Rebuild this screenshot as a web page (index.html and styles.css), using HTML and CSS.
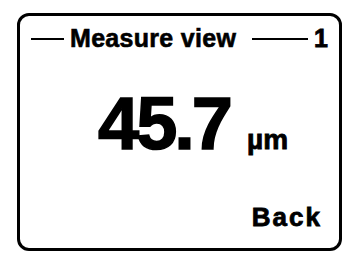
FILE: index.html
```html
<!DOCTYPE html>
<html>
<head>
<meta charset="utf-8">
<link rel="stylesheet" href="styles.css">
</head>
<body>
<div class="screen">
  <div class="header">
    <span class="dash dash-left"></span>
    <span class="title">Measure view</span>
    <span class="dash dash-right"></span>
    <span class="page">1</span>
  </div>
  <div class="reading">
    <span class="value">45.7</span>
    <span class="unit">µm</span>
  </div>
  <div class="footer">
    <span class="back">Back</span>
  </div>
</div>
</body>
</html>
```
FILE: styles.css
```css
html, body {
  margin: 0;
  padding: 0;
  background: #fff;
}
body {
  width: 348px;
  height: 261px;
  overflow: hidden;
  font-family: "Liberation Sans", Arial, sans-serif;
  font-weight: bold;
  color: #000;
}
.screen {
  box-sizing: border-box;
  margin: 13px 0 0 17px;
  width: 325px;
  height: 238px;
  border: 3px solid #000;
  border-radius: 12px;
  display: flex;
  flex-direction: column;
}
.header {
  display: flex;
  align-items: center;
  padding: 10px 11px 0 11px;
  height: 24px;
  font-size: 25px;
  line-height: 24px;
}
.dash {
  height: 2px;
  background: #000;
  margin-top: 2px;
}
.dash-left {
  width: 33px;
  margin-right: 6px;
}
.dash-right {
  flex: 1;
  margin-left: 16px;
  margin-right: 6px;
}
.title {
  letter-spacing: 0.3px;
  -webkit-text-stroke: 0.6px #000;
}
.page {
  -webkit-text-stroke: 0.8px #000;
}
.reading {
  display: flex;
  align-items: baseline;
  margin-top: 37px;
  padding-left: 78px;
}
.value {
  font-size: 74px;
  line-height: 74px;
  letter-spacing: -3px;
  -webkit-text-stroke: 1.5px #000;
}
.unit {
  font-size: 28px;
  margin-left: 17px;
  -webkit-text-stroke: 0.8px #000;
}
.footer {
  margin-top: auto;
  display: flex;
  justify-content: flex-end;
  padding: 0 17px 18px 0;
}
.back {
  font-size: 26px;
  line-height: 26px;
  letter-spacing: 2px;
  -webkit-text-stroke: 0.8px #000;
}
```
